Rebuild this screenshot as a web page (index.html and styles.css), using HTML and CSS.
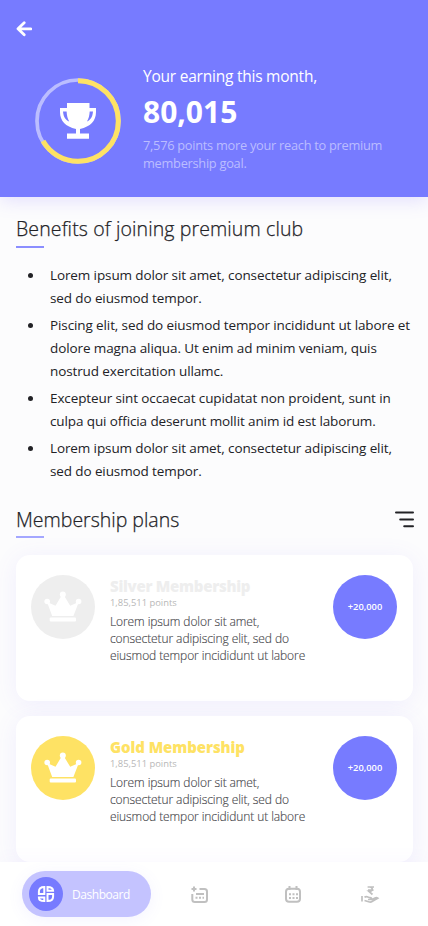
FILE: index.html
```html
<!DOCTYPE html>
<html lang="en">
<head>
<meta charset="utf-8">
<meta name="viewport" content="width=device-width, initial-scale=1">
<title>Premium club</title>
<link rel="stylesheet" href="styles.css">
</head>
<body>
<svg class="defs" width="0" height="0">
  <symbol id="crown" viewBox="0 0 38 32">
    <circle cx="3.2" cy="10.5" r="2.8"/><circle cx="18.8" cy="3.4" r="3"/><circle cx="34.6" cy="10.5" r="2.8"/>
    <path d="M3 11L11.5 14.8L17.3 5H20.3L26.2 14.8L34.8 11L29.4 25H8.2Z"/>
    <rect x="5.7" y="26.5" width="26.3" height="4" rx="1"/>
  </symbol>
</svg>
<div class="screen">
  <header class="hero">
    <svg class="back" width="16" height="16" viewBox="0 0 16 16"><path d="M8.2 1.8L2 7.8L8.2 13.8M2.2 7.8H14.8"/></svg>
    <div class="earning">
      <div class="goal">
        <svg width="88" height="88" viewBox="0 0 88 88">
          <circle class="track" cx="44" cy="44" r="41"/>
          <circle class="progress" cx="44" cy="44" r="40.3" pathLength="100" stroke-dasharray="66.7 100" transform="rotate(-90 44 44)"/>
          <g class="cup">
            <path fill-rule="evenodd" d="M33 26H55.5V31H62V35C62 44 56.500 49.500 46 52V56.500H55V61.800H33V56.500H42V52C31.500 49.500 26 44 26 35V31H33ZM29 34.500C29.500 40.500 32 43.200 35.200 44.500C33.600 41.500 32.800 38.500 32.600 34.500ZM59 34.500H55.700C55.500 38.500 54.700 41.500 53 44.500C56 43.200 58.600 40.500 59 34.500Z"/>
          </g>
        </svg>
      </div>
      <div class="summary">
        <p class="lead">Your earning this month,</p>
        <p class="total">80,015</p>
        <p class="hint">7,576 points more your reach to premium<br>membership goal.</p>
      </div>
    </div>
  </header>
  <main>
    <h2 class="benefit-title">Benefits of joining premium club</h2>
    <ul class="benefits">
      <li>Lorem ipsum dolor sit amet, consectetur adipiscing elit,<br>sed do eiusmod tempor.</li>
      <li>Piscing elit, sed do eiusmod tempor incididunt ut labore et<br>dolore magna aliqua. Ut enim ad minim veniam, quis<br>nostrud exercitation ullamc.</li>
      <li>Excepteur sint occaecat cupidatat non proident, sunt in<br>culpa qui officia deserunt mollit anim id est laborum.</li>
      <li>Lorem ipsum dolor sit amet, consectetur adipiscing elit,<br>sed do eiusmod tempor.</li>
    </ul>
    <div class="plans-head">
      <h2 class="plans-title">Membership plans</h2>
      <svg class="sort" width="20" height="18" viewBox="0 0 20 18"><path d="M2 2.500H19M6.200 9.500H19M10.200 16.300H19"/></svg>
    </div>
    <section class="plans">
      <article class="card silver">
        <div class="medal"><svg width="38" height="32"><use href="#crown"/></svg></div>
        <div class="info">
          <h3>Silver Membership</h3>
          <p class="points">1,85,511 points</p>
          <p class="desc">Lorem ipsum dolor sit amet,<br>consectetur adipiscing elit, sed do<br>eiusmod tempor incididunt ut labore</p>
        </div>
        <div class="bonus">+20,000</div>
      </article>
      <article class="card gold">
        <div class="medal"><svg width="38" height="32"><use href="#crown"/></svg></div>
        <div class="info">
          <h3>Gold Membership</h3>
          <p class="points">1,85,511 points</p>
          <p class="desc">Lorem ipsum dolor sit amet,<br>consectetur adipiscing elit, sed do<br>eiusmod tempor incididunt ut labore</p>
        </div>
        <div class="bonus">+20,000</div>
      </article>
    </section>
  </main>
  <nav class="tabs">
    <a class="tab-active">
      <span class="tab-dot"><svg width="18" height="18" viewBox="0 0 18 18"><path d="M7.300 1.900V9H1.900V6.500Q1.900 1.900 7.300 1.900ZM10.500 1.900Q16.100 1.900 16.100 5.800H10.500ZM1.900 12.500H7.300V16.100Q1.900 16.100 1.900 12.500ZM10.500 9H16.100V11.500Q16.100 16.100 10.500 16.100Z"/></svg></span>
      <span>Dashboard</span>
    </a>
    <svg class="tab" width="20" height="20" viewBox="0 0 20 20">
      <path d="M4 1.500V6.500M1.500 4H6.500M9.500 4H14.500Q17 4 17 6.500V14.500Q17 17 14.500 17H5Q2.300 17 2.300 14.500V9M6 9H14"/>
      <path class="dots" d="M5.500 12.700H14"/>
    </svg>
    <svg class="tab" width="20" height="20" viewBox="0 0 20 20">
      <rect x="3" y="3.800" width="14" height="13" rx="3"/>
      <path d="M6.500 1V5M13.500 1V5"/>
      <path class="dots" d="M6 9.200H15M6 12.900H15"/>
    </svg>
    <svg class="tab hand" width="20" height="20" viewBox="0 0 20 20">
      <path d="M7.600 2H14M8 5.200H13.500M10 2Q12.500 2.500 12.200 4.600Q12 6.500 8.800 6.300L12.500 9.500M2 11V16.500M4.500 12.300Q6 11 8 12L10 12.700Q12.200 13 11.500 14.500H8M4.500 15.500L9.500 17Q11 17.300 12 16.500L17.800 13.200Q16.500 12.300 15 13L12 14.500"/>
    </svg>
  </nav>
</div>
</body>
</html>
```
FILE: styles.css
```css
* { box-sizing: border-box; margin: 0; padding: 0; }
body {
  font-family: "Open Sans", "Noto Sans", sans-serif;
  background: #fcfcfd;
  color: #222226;
  overflow: hidden;
  white-space: nowrap;
}
.defs { display: block; }
.screen { height: 926px; display: flex; flex-direction: column; overflow: hidden; }

.hero {
  height: 197px;
  flex: none;
  padding: 21px 16px 0;
  background: #777bff;
  color: #fff;
  box-shadow: 0 3px 18px rgba(119, 100, 255, .2);
}
.back { display: block; fill: none; stroke: #fff; stroke-width: 2.8; stroke-linecap: round; stroke-linejoin: round; }
.earning { display: flex; padding-left: 18px; margin-top: 27px; }
.goal { padding-top: 13px; width: 109px; }
.goal svg { display: block; }
.track { fill: none; stroke: #bbbdff; stroke-width: 3.7; }
.progress { fill: none; stroke: #fee264; stroke-width: 5; }
.cup { fill: #fff; }
.lead { font-size: 15.500px; line-height: 24px; letter-spacing: -.23px; }
.total { font-size: 30px; line-height: 38px; font-weight: 700; margin-top: 5px; }
.hint { font-size: 12.800px; line-height: 18px; margin-top: 5px; color: #bbbdff; letter-spacing: -.27px; }

main { flex: 1; min-height: 0; padding: 18px 16px 0; }
h2 { font-size: 19.500px; line-height: 28px; font-weight: 300; color: #222226; -webkit-text-stroke: .25px #222226; }
h2::after { content: ""; display: block; width: 28px; height: 2px; background: #a4a7ff; margin-top: 3px; }
.plans-title::after { margin-top: 2px; }
.benefit-title { letter-spacing: .12px; }
.benefit-title::after { height: 1.500px; background: #8b8eff; }
.benefits { list-style: none; margin-top: 16px; padding-left: 34px; font-size: 13.500px; line-height: 23px; letter-spacing: -.11px; }
.benefits li { position: relative; margin-bottom: 4px; }
.benefits li::before { content: ""; position: absolute; left: -22px; top: 9px; width: 5px; height: 5px; border-radius: 50%; background: #222226; }
.plans-head { display: flex; justify-content: space-between; margin-top: 23px; }
.sort { margin: 4px -2px 0 0; fill: none; stroke: #222226; stroke-width: 2; stroke-linecap: round; }

.plans { display: grid; gap: 15px; margin-top: 17px; }
.card {
  width: 396.500px;
  height: 146px;
  display: flex;
  padding: 20px 15.500px 0 15px;
  border-radius: 14px;
  background: #fff;
  box-shadow: 0 3px 24px rgba(119, 100, 255, .09);
}
.medal, .bonus { width: 64px; height: 64px; flex: none; border-radius: 50%; display: flex; align-items: center; justify-content: center; color: #fff; }
.medal svg { fill: #fff; }
.silver .medal { background: #eee; }
.gold .medal { background: #fee264; }
.info { flex: 1; padding-left: 15px; }
.info h3 { font-size: 15px; line-height: 20px; font-weight: 800; margin-top: 1px; }
.silver h3 { color: #eee; letter-spacing: -.27px; }
.gold h3 { color: #fee264; letter-spacing: -.08px; }
.points { font-size: 9.400px; line-height: 12px; margin-top: 1px; color: #b8b8b8; }
.desc { font-size: 12px; line-height: 17px; margin-top: 4px; color: #48484c; font-weight: 300; letter-spacing: -.09px; -webkit-text-stroke: .15px #48484c; }
.bonus { background: #777bff; font-size: 9.300px; font-weight: 600; }

.tabs {
  height: 64px;
  flex: none;
  position: relative;
  display: flex;
  align-items: flex-start;
  padding: 9px 0 0 22px;
  background: #fff;
  box-shadow: 0 -4px 16px rgba(119, 100, 255, .03);
}
.tab-active {
  width: 129px;
  height: 46px;
  display: flex;
  align-items: center;
  gap: 9px;
  padding-left: 7px;
  border-radius: 23px;
  background: #c4c3ff;
  color: #fff;
  font-size: 12px;
  letter-spacing: -.45px;
  box-shadow: 0 3px 16px rgba(119, 100, 255, .08);
}
.tab-dot { width: 34px; height: 34px; border-radius: 50%; background: #777bff; display: flex; align-items: center; justify-content: center; }
.tab-dot svg { fill: none; stroke: #fff; stroke-width: 2; }
.tab { margin: 14px 0 0 39px; fill: none; stroke: #c0c0c0; stroke-width: 2; }
.tab + .tab { margin-left: 73px; }
.tab.hand { margin-left: 57px; stroke-width: 1.700; }
.dots { stroke-dasharray: 2 1.500; }
```
